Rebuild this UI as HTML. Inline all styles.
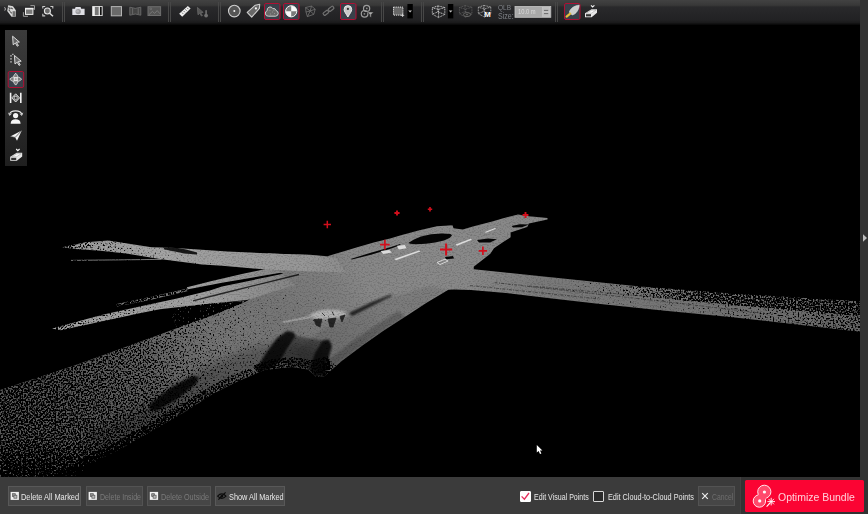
<!DOCTYPE html>
<html><head><meta charset="utf-8">
<style>
html,body{margin:0;padding:0;background:#000;overflow:hidden}
body{width:868px;height:514px;position:relative;font-family:"Liberation Sans",sans-serif;color:#e6e6e6}
#view{position:absolute;left:0;top:25px;width:860px;height:452px;background:#000;overflow:hidden}
#top{position:absolute;left:0;top:0;width:860px;height:25px;background:linear-gradient(#424242 0,#383838 21%,#29292b 28%,#222224 78%,#1a1a1b 90%,#060606 100%)}
#rside{position:absolute;left:860px;top:0;width:8px;height:514px;background:#333}
#bot{position:absolute;left:0;top:477px;width:868px;height:37px;background:#3b3b3b}
#botr{position:absolute;left:740px;top:477px;width:128px;height:37px;background:#333;border-left:1px solid #424242}
#ltool{position:absolute;left:5px;top:30px;width:22px;height:136px;background:linear-gradient(#3b3b3b 0,#323232 35%,#272727 70%,#1f1f1f 100%)}
.btn{position:absolute;top:486px;height:18px;border:1px solid #585858;background:#484848}
.btn.dis{background:#464646;border-color:#535353}
.t{position:absolute;z-index:3;white-space:nowrap;line-height:1.25;transform-origin:0 50%;color:#e8e8e8}
#opt{position:absolute;left:745px;top:480px;width:118.7px;height:32.4px;background:#fb0433;border-radius:1.5px}
.cb{position:absolute;width:9px;height:9px;border:1px solid #d8d8d8;background:#2c2c2c;border-radius:1px}
svg{position:absolute;left:0;top:0}
</style></head><body>
<div id="view"></div>
<svg id="cloud" width="868" height="514" viewBox="0 0 868 514">
<defs>
<radialGradient id="gB" gradientUnits="userSpaceOnUse" cx="450" cy="245" r="460" gradientTransform="translate(450 245) scale(1 0.6) translate(-450 -245)">
<stop offset="0" stop-color="#8a8a8a"/><stop offset="0.3" stop-color="#868686"/><stop offset="0.6" stop-color="#808080"/><stop offset="1" stop-color="#707070"/></radialGradient>
<linearGradient id="gR" gradientUnits="userSpaceOnUse" x1="520" y1="0" x2="860" y2="0"><stop offset="0" stop-color="#000" stop-opacity="0.2"/><stop offset="0.2" stop-color="#000" stop-opacity="0.33"/><stop offset="0.38" stop-color="#000" stop-opacity="0.52"/><stop offset="0.53" stop-color="#000" stop-opacity="0.62"/><stop offset="1" stop-color="#000" stop-opacity="0.62"/></linearGradient><linearGradient id="gR2" gradientUnits="userSpaceOnUse" x1="520" y1="0" x2="860" y2="0"><stop offset="0" stop-color="#000" stop-opacity="0.2"/><stop offset="0.2" stop-color="#000" stop-opacity="0.3"/><stop offset="0.53" stop-color="#000" stop-opacity="0.36"/><stop offset="0.76" stop-color="#000" stop-opacity="0.46"/><stop offset="1" stop-color="#000" stop-opacity="0.53"/></linearGradient><linearGradient id="gRd" gradientUnits="userSpaceOnUse" x1="465" y1="0" x2="545" y2="0"><stop offset="0" stop-color="#000" stop-opacity="0"/><stop offset="1" stop-color="#000" stop-opacity="0.1"/></linearGradient>
<linearGradient id="gLa" gradientUnits="userSpaceOnUse" x1="280" y1="0" x2="60" y2="0"><stop offset="0" stop-color="#000" stop-opacity="0.2"/><stop offset="0.36" stop-color="#000" stop-opacity="0.28"/><stop offset="0.82" stop-color="#000" stop-opacity="0.43"/><stop offset="1" stop-color="#000" stop-opacity="0.56"/></linearGradient>
<linearGradient id="gSt" gradientUnits="userSpaceOnUse" x1="300" y1="0" x2="50" y2="0"><stop offset="0" stop-color="#000" stop-opacity="0.2"/><stop offset="0.4" stop-color="#000" stop-opacity="0.3"/><stop offset="0.8" stop-color="#000" stop-opacity="0.43"/><stop offset="1" stop-color="#000" stop-opacity="0.56"/></linearGradient>
<linearGradient id="gM" gradientUnits="userSpaceOnUse" x1="300" y1="330" x2="0" y2="450"><stop offset="0" stop-color="#000" stop-opacity="0.3"/><stop offset="0.155" stop-color="#000" stop-opacity="0.37"/><stop offset="0.23" stop-color="#000" stop-opacity="0.4"/><stop offset="0.49" stop-color="#000" stop-opacity="0.53"/><stop offset="0.83" stop-color="#000" stop-opacity="0.6"/><stop offset="1" stop-color="#000" stop-opacity="0.61"/></linearGradient>
<linearGradient id="gDim" gradientUnits="userSpaceOnUse" x1="360" y1="270" x2="70" y2="420"><stop offset="0" stop-color="#000" stop-opacity="0"/><stop offset="0.096" stop-color="#000" stop-opacity="0.06"/><stop offset="0.266" stop-color="#000" stop-opacity="0.1"/><stop offset="0.466" stop-color="#000" stop-opacity="0.09"/><stop offset="0.726" stop-color="#000" stop-opacity="0.18"/><stop offset="1" stop-color="#000" stop-opacity="0.2"/></linearGradient>
<linearGradient id="gBL" gradientUnits="userSpaceOnUse" x1="346" y1="0" x2="60" y2="0"><stop offset="0" stop-color="#8c8c8c"/><stop offset="0.15" stop-color="#969696"/><stop offset="0.4" stop-color="#9b9b9b"/><stop offset="0.65" stop-color="#a4a4a4"/><stop offset="1" stop-color="#9a9a9a"/></linearGradient>
<linearGradient id="gBS" gradientUnits="userSpaceOnUse" x1="290" y1="0" x2="200" y2="0"><stop offset="0" stop-color="#858585"/><stop offset="1" stop-color="#a0a0a0"/></linearGradient>
<linearGradient id="gBot" gradientUnits="userSpaceOnUse" x1="0" y1="440" x2="0" y2="477"><stop offset="0" stop-color="#000" stop-opacity="0"/><stop offset="1" stop-color="#000" stop-opacity="0.3"/></linearGradient>
<filter id="bl2" x="-20%" y="-20%" width="140%" height="140%"><feGaussianBlur stdDeviation="4"/></filter>
<filter id="bl" x="-20%" y="-20%" width="140%" height="140%"><feGaussianBlur stdDeviation="0.8"/></filter>
<filter id="sp2" x="0" y="25" width="860" height="452" filterUnits="userSpaceOnUse" color-interpolation-filters="sRGB">
<feTurbulence type="fractalNoise" baseFrequency="0.55 0.9" numOctaves="1" seed="11" result="n"/>
<feComposite in="n" in2="SourceGraphic" operator="arithmetic" k1="0" k2="1" k3="1" k4="-0.5" result="c"/>
<feColorMatrix in="c" type="matrix" values="0 0 0 0 0  0 0 0 0 0  0 0 0 0 0  0 0 0 5 -2.5"/>
</filter>
<filter id="sp" x="0" y="24" width="860" height="453" filterUnits="userSpaceOnUse" color-interpolation-filters="sRGB">
<feTurbulence type="fractalNoise" baseFrequency="0.6" numOctaves="1" seed="5" result="n"/>
<feComposite in="n" in2="SourceGraphic" operator="arithmetic" k1="0" k2="1" k3="1" k4="-0.5" result="c"/>
<feColorMatrix in="c" type="matrix" values="0 0 0 0 0  0 0 0 0 0  0 0 0 0 0  0 0 0 7 -3.5"/>
<feGaussianBlur stdDeviation="0.45"/>
</filter>
</defs>
<polygon points="268.0,253.3 280.0,254.0 310.0,254.7 327.3,256.2 339.0,252.8 356.4,247.6 373.7,242.4 391.0,238.2 400.0,235.6 418.4,230.4 436.9,226.2 452.5,225.3 453.5,228.2 462.7,229.5 473.7,226.2 492.2,221.6 503.2,218.3 518.0,214.6 529.0,216.2 547.5,217.9 547.5,219.4 529.0,223.4 527.2,227.1 510.6,232.6 510.6,237.3 503.2,241.9 494.0,248.3 490.3,253.8 473.7,266.8 473.8,269.3 515.0,273.4 563.0,278.5 640.0,286.5 732.7,293.5 860.0,301.3 860.0,331.8 732.7,317.2 660.0,310.3 598.0,303.7 552.0,298.5 506.0,293.0 471.0,290.0 454.0,289.6 448.4,289.8 427.0,302.5 405.6,316.4 384.2,330.3 362.8,345.3 341.4,361.3 324.3,376.3 316.0,377.0 308.0,369.5 292.0,367.0 276.0,368.5 262.8,370.8 257.7,372.8 237.4,381.5 212.0,394.2 186.7,410.7 153.8,429.7 123.4,447.5 98.0,460.0 73.0,477.0 0.0,477.0 0.0,390.0 73.0,366.0 106.5,354.0 131.0,345.0 160.0,334.5 177.4,328.0 220.0,312.5 247.0,301.0 283.0,273.5 265.8,269.0" fill="url(#gB)"/>
<polygon points="116.6,304.0 150.0,297.0 187.6,288.5 188.0,291.0 150.0,300.0 117.0,306.5" fill="url(#gB)"/>
<polygon points="247.0,301.0 201.5,304.5 180.0,307.5 172.0,316.0 177.4,328.0 220.0,312.5" fill="url(#gB)"/>
<path d="M70.3 260.4L161.5 259.4" stroke="#8a8a8a" stroke-width="0.9"/>
<path d="M268.0,253.3 280.0,254.0 310.0,254.7 327.3,256.2 339.0,252.8 356.4,247.6 373.7,242.4 391.0,238.2 400.0,235.6 418.4,230.4 436.9,226.2 452.5,225.3 453.5,228.2 462.7,229.5 473.7,226.2 492.2,221.6 503.2,218.3 518.0,214.6 529.0,216.2 547.5,217.9 547.5,219.4 529.0,223.4 527.2,227.1 510.6,232.6 510.6,237.3 503.2,241.9 494.0,248.3 490.3,253.8 473.7,266.8 473.8,269.3 515.0,273.4 563.0,278.5 640.0,286.5 732.7,293.5 860.0,301.3 860.0,331.8 732.7,317.2 660.0,310.3 598.0,303.7 552.0,298.5 506.0,293.0 471.0,290.0 454.0,289.6 448.4,289.8 427.0,302.5 405.6,316.4 384.2,330.3 362.8,345.3 341.4,361.3 324.3,376.3 316.0,377.0 308.0,369.5 292.0,367.0 276.0,368.5 262.8,370.8 257.7,372.8 237.4,381.5 212.0,394.2 186.7,410.7 153.8,429.7 123.4,447.5 98.0,460.0 73.0,477.0 0.0,477.0 0.0,390.0 73.0,366.0 106.5,354.0 131.0,345.0 160.0,334.5 177.4,328.0 220.0,312.5 247.0,301.0 283.0,273.5 265.8,269.0Z" fill="url(#gDim)"/>
<polygon points="187.0,287.3 211.8,281.0 243.0,273.8 265.8,269.0 285.0,272.0 222.0,282.7 187.0,289.6" fill="url(#gBS)"/><polygon points="52.0,328.5 101.4,315.0 142.0,306.0 177.0,298.6 210.0,290.4 222.0,286.5 282.0,274.0 295.0,285.0 247.0,300.0 201.5,304.5 160.0,309.2 142.0,312.7 101.4,321.6 60.8,330.2" fill="url(#gBS)"/>
<polygon points="62.2,247.2 85.5,242.2 108.3,240.6 126.0,243.2 151.4,247.2 171.7,247.7 202.0,249.8 227.4,251.5 272.0,253.5 310.0,255.0 336.0,258.0 346.0,272.5 300.0,271.0 265.8,269.5 222.2,265.8 202.0,264.4 161.5,259.2 126.0,253.5 100.7,250.8 75.3,249.0" fill="url(#gBL)"/>
<polygon points="163.8,247.6 175,247.4 186,249.5 197,252.6 197,254.6 184.6,253.6 172,251 163.8,249.2" fill="#000" fill-opacity="0.85"/>
<polygon points="465,262 860,295 860,336 465,296" fill="url(#gRd)"/>
<path d="M494.6 282.6L660 301L760 313M529 286L660 297.6L740 305.5M470 285.5L600 299" stroke="#000" stroke-opacity="0.4" stroke-width="1.1" stroke-dasharray="3 1.5 1 1" fill="none"/>
<path d="M299 274.5L222 293.5L193 300.8" stroke="#000" stroke-opacity="0.75" stroke-width="1.3" fill="none"/>
<polygon points="324.3,376.3 341.4,361.3 362.8,345.3 384.2,330.3 405.6,316.4 398,311 376,325 354,340 333,356 318,368" fill="#000" fill-opacity="0.2" filter="url(#bl)"/>
<polygon points="324.3,376.3 341.4,361.3 362.8,345.3 384.2,330.3 405.6,316.4 427,302.5 448,290 430,286 392,297 351,315 322,330 296,350 300,370 316,377" fill="#000" fill-opacity="0.09" filter="url(#bl)"/>
<polygon points="98,462 153.8,431.7 212,396.2 257.7,374.8 292,369 324,378 322,350 288,340 245,349 199,371 141,406.7 85,437" fill="#000" fill-opacity="0.24" filter="url(#bl2)"/>
<polygon points="150.0,404.0 170.0,388.0 192.0,376.0 199.0,377.0 196.0,384.0 176.0,400.0 156.0,411.0 150.0,410.0" fill="#000" fill-opacity="0.85" filter="url(#bl)"/>
<polygon points="287.0,331.0 293.0,332.0 296.0,336.0 288.0,348.0 280.0,362.0 270.0,369.0 258.0,372.0 256.0,369.0 266.0,353.0 277.0,338.0" fill="#000" fill-opacity="0.85" filter="url(#bl)"/>
<polygon points="322.0,340.5 329.0,339.5 332.0,346.0 328.0,360.0 325.0,376.0 314.0,377.0 309.0,368.0 315.0,352.0" fill="#000" fill-opacity="0.85" filter="url(#bl)"/>
<polygon points="296.0,336.0 322.0,340.5 315.0,352.0 309.0,368.0 292.0,367.0 280.0,362.0" fill="#000" fill-opacity="0.38" filter="url(#bl)"/>
<polygon points="349.0,313.0 372.0,302.0 391.0,294.5 392.0,296.0 374.0,305.0 352.0,316.0" fill="#000" fill-opacity="0.75" filter="url(#bl)"/>
<polygon points="282,321.5 308,316 312,318 284,323" fill="#a8a8a8" fill-opacity="0.7"/>
<polygon points="308,316 316,311.5 326,309.5 338,310 346,312 345,316.5 334,318.5 318,320" fill="#b2b2b2" filter="url(#bl)"/>
<path d="M314 319.5L322 319L320 327L316 325ZM328 319L336 318L333 327L330 327ZM340 316.5L345 315L342 322ZM322 313l3 3M332 311.5l2 4" fill="#151515" fill-opacity="0.85" stroke="#222" stroke-width="0.8"/>
<polygon points="408.6,242.8 414.0,239.6 421.0,236.6 431.0,234.2 442.0,233.6 450.5,234.0 452.0,235.4 449.5,238.0 444.0,240.6 435.0,242.6 426.0,243.8 416.0,244.2 410.0,243.8" fill="#050505"/>
<polygon points="350.4,258.9 370.0,253.0 391.0,247.0 400.0,244.0 400.5,245.0 392.0,248.3 371.0,254.7 352.0,259.5" fill="#050505"/>
<polygon points="477.0,240.0 488.0,238.6 497.0,239.2 490.0,242.4 479.0,242.6" fill="#050505"/>
<polygon points="511.6,226.0 520.0,224.3 529.0,224.5 522.0,227.2 513.0,227.6" fill="#050505"/>
<polygon points="445.0,257.0 453.0,256.0 454.0,258.5 446.0,259.3" fill="#050505"/>
<g filter="url(#sp)"><polygon points="520,258 860,285 860,316.5 560,289.5 520,286" fill="url(#gR)"/><polygon points="520,286 560,289.5 860,316.5 860,345 520,303" fill="url(#gR2)"/><polygon points="40,230 280,245 280,262 268,271 40,255" fill="url(#gLa)"/><polygon points="40,256 268,272 300,272 300,290 247,301 220,312.5 177.4,328 160,334.5 131,345 106.5,354 73,366 0,390 0,300" fill="url(#gSt)"/><polygon points="300,290 247,301 220,312.5 177.4,328 160,334.5 131,345 106.5,354 73,366 0,390 0,477 330,477 330,300" fill="url(#gM)"/><polygon points="116.6,304.0 150.0,297.0 187.6,288.5 188.0,291.0 150.0,300.0 117.0,306.5" fill="#000" fill-opacity="0.4"/><polygon points="247.0,301.0 201.5,304.5 180.0,307.5 172.0,316.0 177.4,328.0 220.0,312.5" fill="#000" fill-opacity="0.7"/><rect x="0" y="440" width="200" height="37" fill="url(#gBot)"/><polygon points="73,477 98,460 123.4,447.5 153.8,429.7 186.7,410.7 212,394.2 237.4,381.5 257.7,372.8 250,368 228,377 204,390 180,405 148,424 118,441 90,455 50,477" fill="#000" fill-opacity="0.28"/><polygon points="257.7,372.8 276,368.5 292,367 308,369.5 316,377 324.3,376.3 336,366 328,356 312,360 294,357 272,359 252,366" fill="#000" fill-opacity="0.4"/><polygon points="324.3,376.3 341.4,361.3 362.8,345.3 384.2,330.3 378,326 357,340 336,356 322,366" fill="#000" fill-opacity="0.28"/></g>
<g filter="url(#sp2)" opacity="0.13"><rect x="0" y="25" width="860" height="452" fill="#000" fill-opacity="0.52"/></g>
<polygon points="380.6,250.9 389.2,250.0 391.8,252.6 383.2,253.9" fill="#dcdcdc"/>
<polygon points="397.0,245.7 404.8,244.9 406.5,248.3 398.7,249.5" fill="#dcdcdc"/>
<polygon points="394.4,258.9 419.0,250.4 420.5,251.4 396.0,260.2" fill="#dcdcdc"/>
<polygon points="455.5,244.6 470.5,238.8 472.0,239.8 457.0,245.8" fill="#dcdcdc"/>
<polygon points="484.8,232.0 495.0,228.0 496.0,228.8 486.0,232.8" fill="#dcdcdc"/>
<polygon points="437,262.5 445,259.2 448,261 440,264.6" fill="none" stroke="#ddd" stroke-width="0.9"/>
<path d="M323.6 224.5H331.0M327.3 220.8V228.2" stroke="#d20f1c" stroke-width="1.5" fill="none"/>
<path d="M394.4 213.0H399.6M397.0 210.4V215.6" stroke="#d20f1c" stroke-width="1.9" fill="none"/>
<path d="M427.8 209.2H432.2M430.0 207.0V211.4" stroke="#d20f1c" stroke-width="1.6" fill="none"/>
<path d="M522.6 215.0H528.4M525.5 212.1V217.9" stroke="#d20f1c" stroke-width="1.9" fill="none"/>
<path d="M380.1 244.6H389.7M384.9 239.8V249.4" stroke="#d20f1c" stroke-width="1.7" fill="none"/>
<path d="M440.0 249.5H452.2M446.1 243.4V255.6" stroke="#d20f1c" stroke-width="2.0" fill="none"/>
<path d="M478.7 250.8H487.1M482.9 246.6V255.0" stroke="#d20f1c" stroke-width="1.7" fill="none"/>
</svg>
<div id="top"></div>
<div id="rside"></div>
<div id="ltool"></div>
<div id="bot"></div><div id="botr"></div>
<div class="btn" style="left:8px;width:71px"></div>
<div class="btn dis" style="left:86px;width:55px"></div>
<div class="btn dis" style="left:147px;width:62px"></div>
<div class="btn" style="left:215px;width:68px"></div>
<div class="btn dis" style="left:698px;width:35px"></div>
<div class="t" style="left:21.3px;top:491.5px;font-size:8.6px;transform:scaleX(0.863);">Delete All Marked</div>
<div class="t" style="left:99.6px;top:491.5px;font-size:8.6px;transform:scaleX(0.817);color:#7a7a7a;">Delete Inside</div>
<div class="t" style="left:160.8px;top:491.5px;font-size:8.6px;transform:scaleX(0.844);color:#7a7a7a;">Delete Outside</div>
<div class="t" style="left:228.5px;top:491.5px;font-size:8.6px;transform:scaleX(0.854);">Show All Marked</div>
<div class="t" style="left:534.2px;top:491.5px;font-size:8.6px;transform:scaleX(0.821);">Edit Visual Points</div>
<div class="t" style="left:607.7px;top:491.5px;font-size:8.6px;transform:scaleX(0.849);">Edit Cloud-to-Cloud Points</div>
<div class="t" style="left:711.5px;top:491.5px;font-size:8.6px;transform:scaleX(0.792);color:#6e6e6e;">Cancel</div>
<div id="opt"></div>
<div class="t" style="left:777.9px;top:490.4px;font-size:11.5px;transform:scaleX(0.91);color:#ffd0da;">Optimize Bundle</div>
<div class="t" style="left:497.6px;top:2.8px;font-size:7.8px;transform:scaleX(0.84);color:#7e8186;">QLB</div>
<div class="t" style="left:497.6px;top:11.6px;font-size:8.2px;transform:scaleX(0.86);color:#7e8186;">Size:</div>
<div class="t" style="left:518px;top:7.4px;font-size:7.6px;transform:scaleX(0.76);color:#dadada;">10.0 m</div>
<div class="cb" style="left:520px;top:490.5px;background:#fff;border-color:#fff"></div><div class="cb" style="left:593px;top:490.5px"></div>
<svg id="icons" width="868" height="514" viewBox="0 0 868 514">
<rect x="62" y="2" width="1" height="20" fill="#474747"/><rect x="64" y="2" width="1" height="20" fill="#474747"/>
<rect x="168" y="2" width="1" height="20" fill="#474747"/><rect x="170" y="2" width="1" height="20" fill="#474747"/>
<rect x="218" y="2" width="1" height="20" fill="#474747"/><rect x="220" y="2" width="1" height="20" fill="#474747"/>
<rect x="381" y="2" width="1" height="20" fill="#474747"/><rect x="383" y="2" width="1" height="20" fill="#474747"/>
<rect x="421" y="2" width="1" height="20" fill="#474747"/><rect x="423" y="2" width="1" height="20" fill="#474747"/>
<rect x="555" y="2" width="1" height="20" fill="#474747"/><rect x="557" y="2" width="1" height="20" fill="#474747"/>
<rect x="264.5" y="3.5" width="15.5" height="16" rx="1.5" fill="#39404a" stroke="#b00f33" stroke-width="1"/>
<rect x="283.5" y="3.5" width="15.5" height="16" rx="1.5" fill="#39404a" stroke="#b00f33" stroke-width="1"/>
<rect x="340.5" y="3.5" width="15.5" height="16" rx="1.5" fill="#39404a" stroke="#b00f33" stroke-width="1"/>
<rect x="564.5" y="3.5" width="15.5" height="16" rx="1.5" fill="#39404a" stroke="#b00f33" stroke-width="1"/>
<rect x="8.2" y="71.5" width="15.5" height="16" rx="1.5" fill="#39404a" stroke="#b00f33" stroke-width="1"/>
<g><path d="M8.2 5.2L13 6.2L16 10.5V16.6L11.5 16.8L7.2 11Z" fill="#d8d8d8"/><path d="M12.6 11.2H15.6V16.3H12.6Z" fill="#707070"/><path d="M8.6 7.2l1.6 2M10.2 11.5l1.5 1.8M10.6 7.8l2.2 1.2M8.8 9.6l1 1.6" stroke="#555" stroke-width="1.1"/><path d="M4.6 7.2Q6.2 9 4.8 10.6" stroke="#bbb" stroke-width="1" fill="none"/></g>
<g><path d="M30.4 5.6H34.5V9.8M23.4 12.2V16.3H28" stroke="#9a9a9a" stroke-width="1" fill="none"/><rect x="25.5" y="8.4" width="7.4" height="6" fill="#7a7a7a" stroke="#efefef" stroke-width="1"/><rect x="25" y="7.9" width="8.4" height="1.6" fill="#efefef"/></g>
<g fill="none"><path d="M42.8 8.6V6.5H45.2M50.4 6.5H52.8V8.6M42.8 13.8V15.9H45.2" stroke="#c8c8c8" stroke-width="1.1"/><circle cx="47.4" cy="11" r="3" fill="#6a6a6a" stroke="#e4e4e4" stroke-width="1.1"/><path d="M49.6 13.3L53 16.3" stroke="#dcdcdc" stroke-width="1.5"/></g>
<g><path d="M72.3 8.8H75L75.6 7H80.6L81.2 8.8H84.6V14.9H72.3Z" fill="#dedee4"/><circle cx="78.2" cy="11.6" r="2.7" fill="#9a9a9e"/><circle cx="77.6" cy="11.2" r="1.4" fill="#b4b4b8"/></g>
<g><rect x="92.2" y="6.1" width="10.4" height="9.9" fill="#f2f2f2"/><rect x="94.8" y="6.9" width="3.9" height="8.3" fill="#777"/><rect x="99.9" y="6.9" width="1.8" height="8.3" fill="#111"/></g>
<rect x="111.3" y="6.6" width="10.2" height="9.2" fill="#6a6a6a" stroke="#b4b4b4" stroke-width="1"/>
<path d="M129.8 7.2Q135.3 9.6 140.8 7.2V15.2Q135.3 12.8 129.8 15.2Z M132.6 8.2V14.2M138.2 8.2V14.2" fill="#444" stroke="#6c6c6c" stroke-width="0.9"/>
<g><rect x="148" y="6.7" width="12.6" height="8.8" fill="#555" stroke="#6e6e6e" stroke-width="1"/><path d="M149 14.6L152.4 11.4L154.6 13.4L157.2 10.6L160 13.8" stroke="#7a7a7a" stroke-width="0.9" fill="none"/><circle cx="150.8" cy="8.8" r="0.9" fill="none" stroke="#7a7a7a" stroke-width="0.7"/></g>
<g><path d="M179.2 13.8L187.8 5.9L190.6 8.4L182.2 16.8Z" fill="#efefef"/><path d="M182 12.6l1.2 1.3M183.7 11l1.2 1.3M185.4 9.4l1.2 1.3M187.1 7.8l1.2 1.3" stroke="#555" stroke-width="0.8"/></g>
<g><path d="M197.4 7.4L203.2 12.4L200.6 12.6L202.4 15.6L201.4 16L199.8 13.1L198 14.8Z" fill="#555" stroke="#6a6a6a" stroke-width="0.8"/><path d="M206.1 10.8V15" stroke="#707070" stroke-width="1.6" stroke-linecap="round"/><circle cx="206.1" cy="15.6" r="1.9" fill="#707070"/></g>
<circle cx="234.3" cy="11.1" r="5.8" fill="#555" stroke="#cfcfcf" stroke-width="1.1"/><circle cx="234.3" cy="11.1" r="1" fill="#f4f4f4"/>
<path d="M247.2 12.4L255.3 5.2L259.7 4.3L259.4 8.4L251.7 17.2Z" fill="#686868" stroke="#cfcfcf" stroke-width="1.1" stroke-linejoin="round"/><circle cx="255.9" cy="8.4" r="1.1" fill="#f8f8f8"/>
<path d="M268.4 16.2H275.6A2.9 2.9 0 0 0 276 10.5A2.6 2.6 0 0 0 272.8 8.6A3 3 0 0 0 267.2 10.6A2.9 2.9 0 0 0 268.4 16.2Z" fill="#6a6a6a" stroke="#d0d0d0" stroke-width="1"/><path d="M269.5 10.5h.8M272 12h.8M270 14h.8M274 13.5h.8M273.5 10.6h.8" stroke="#aaa" stroke-width="0.8"/>
<circle cx="291.2" cy="11.3" r="5.6" fill="#7a7a7a" stroke="#f4f4f4" stroke-width="1"/><path d="M291.2 11.3V5.7A5.6 5.6 0 0 1 296.8 11.3Z M291.2 11.3V16.9A5.6 5.6 0 0 1 285.6 11.3Z" fill="#fafafa"/>
<path d="M305.6 7.5L311.5 6.1L315.2 9.2L313.8 14.3L307.4 16.6L306 12Z M310.2 11L305.6 7.5M310.2 11L311.5 6.1M310.2 11L315.2 9.2M310.2 11L313.8 14.3M310.2 11L307.4 16.6M310.2 11L306 12" fill="none" stroke="#727272" stroke-width="0.8"/>
<g transform="rotate(-38 328.5 10.8)" fill="none" stroke="#727272" stroke-width="1.2"><rect x="322.4" y="9.3" width="5.6" height="3" rx="0.8"/><rect x="329" y="9.3" width="5.6" height="3" rx="0.8"/></g>
<path d="M347.9 17C346 13.6 344.1 11.6 344.1 9.4A3.8 3.8 0 0 1 351.7 9.4C351.7 11.6 349.8 13.6 347.9 17Z" fill="#c8c8c8" stroke="#f2f2f2" stroke-width="0.9"/><circle cx="347.9" cy="8.9" r="1.1" fill="#333"/>
<g fill="none" stroke="#9c9c9c" stroke-width="1.2"><circle cx="366.6" cy="8.4" r="3.1"/><circle cx="364.6" cy="13.8" r="3.3"/></g><circle cx="366.8" cy="8.4" r="0.9" fill="#888"/><circle cx="364.4" cy="13.8" r="0.9" fill="#888"/><path d="M367.4 12H373.6L371.2 14.6V17.6L369.8 16.6V14.6Z" fill="#b0b0b0" stroke="#222" stroke-width="0.5"/>
<rect x="393.5" y="7.1" width="9.4" height="8" fill="#686868" stroke="#e6e6e6" stroke-width="1" stroke-dasharray="1.2 0.9"/><path d="M402.6 13.5V17M400.8 15.4H404.2" stroke="#ddd" stroke-width="0.8"/>
<rect x="407.4" y="4" width="5.4" height="14.4" fill="#000"/><path d="M408.2 10.4H412.0L410.09999999999997 12.4Z" fill="#c4c4c4"/>
<rect x="447.9" y="4" width="5.4" height="14.4" fill="#000"/><path d="M448.7 10.4H452.5L450.59999999999997 12.4Z" fill="#c4c4c4"/>
<path d="M437.90000000000003 5.9L444.8 7.5V14.4L438.6 17.6L432.3 14.1V7.800000000000001Z M432.3 7.800000000000001L438.6 9.4L444.8 7.5M438.6 9.4V17.6M437.90000000000003 5.9V11.9L432.3 14.1M437.90000000000003 11.9L444.8 14.4" fill="none" stroke="#d8d8d8" stroke-width="0.9" stroke-dasharray="1 0.7"/>
<path d="M465.0 5.6L471.9 7.199999999999999V14.1L465.7 17.299999999999997L459.4 13.799999999999999V7.5Z M459.4 7.5L465.7 9.1L471.9 7.199999999999999M465.7 9.1V17.299999999999997M465.0 5.6V11.6L459.4 13.799999999999999M465.0 11.6L471.9 14.1" fill="none" stroke="#626262" stroke-width="0.8" stroke-dasharray="1 0.7"/>
<ellipse cx="467" cy="14.6" rx="3.6" ry="2" fill="#2a2a2a" stroke="#707070" stroke-width="0.8"/><circle cx="467" cy="14.6" r="0.8" fill="#707070"/>
<path d="M483.90000000000003 5.4L490.8 7.0V13.9L484.6 17.1L478.3 13.6V7.300000000000001Z M478.3 7.300000000000001L484.6 8.9L490.8 7.0M484.6 8.9V17.1M483.90000000000003 5.4V11.4L478.3 13.6M483.90000000000003 11.4L490.8 13.9" fill="none" stroke="#b4b4b4" stroke-width="0.9" stroke-dasharray="1 0.7"/>
<text x="484.2" y="17" font-family="Liberation Sans, sans-serif" font-weight="bold" font-size="7.8" fill="#fff" stroke="#222" stroke-width="0.3" paint-order="stroke">M</text>
<rect x="515" y="6.5" width="35.8" height="10.8" fill="#a9a9a9" stroke="#c6c6c6" stroke-width="0.8"/><rect x="542.4" y="7.6" width="7.4" height="4.2" fill="#bcbcbc" stroke="#ccc" stroke-width="0.5"/><rect x="542.4" y="12.2" width="7.4" height="4.2" fill="#bcbcbc" stroke="#ccc" stroke-width="0.5"/><path d="M544 10.4H548.2M544 13.6H548.2" stroke="#6a6a6a" stroke-width="1"/>
<path d="M569.4 12.2C570 8.8 574 5.6 579.2 5.2C579 9.6 576 14.2 572.2 15Z" fill="#cdcdcd" stroke="#e8e8e8" stroke-width="0.6"/><path d="M570.2 13.6L566.6 16.6" stroke="#e6bf3a" stroke-width="2.2" stroke-linecap="round"/>
<path d="M585 13.2L591.5 9.2H597V12.799999999999999L591.6 17.2H585Z" fill="#e8e8e8"/><path d="M586 14.2H591V16.4H586Z" fill="#333"/><path d="M586.4 13.2L591.9 10.1H596L591.4 13.2Z" fill="#fafafa" stroke="#888" stroke-width="0.4"/><path d="M591 5.3999999999999995L592.6 6.999999999999999L594.4 5.3999999999999995" fill="none" stroke="#f4f4f4" stroke-width="1.15"/>
<path d="M12.6 36.2L19.4 42L16.4 42.2L18.4 45.6L17.2 46.2L15.4 43L13.2 44.8Z" fill="#666" stroke="#e6e6e6" stroke-width="0.9" stroke-linejoin="round"/>
<path d="M14.4 55.4L21.2 61.2L18.2 61.4L20.2 64.8L19 65.4L17.2 62.2L15 64Z" fill="#666" stroke="#e6e6e6" stroke-width="0.9" stroke-linejoin="round"/><path d="M10.4 55.8h1.2M10.4 58.8h1.2M10.4 61.8h1.2M12.4 54.4h1" stroke="#f4f4f4" stroke-width="1.2"/>
<g fill="#808080" stroke="#f4f4f4" stroke-width="0.75"><path d="M15.7 73.3C17.6 75.2 18.3 76.6 17.3 77.7H14.1C13.1 76.6 13.8 75.2 15.7 73.3Z" transform="rotate(0 15.7 79.2)"/><path d="M15.7 73.3C17.6 75.2 18.3 76.6 17.3 77.7H14.1C13.1 76.6 13.8 75.2 15.7 73.3Z" transform="rotate(90 15.7 79.2)"/><path d="M15.7 73.3C17.6 75.2 18.3 76.6 17.3 77.7H14.1C13.1 76.6 13.8 75.2 15.7 73.3Z" transform="rotate(180 15.7 79.2)"/><path d="M15.7 73.3C17.6 75.2 18.3 76.6 17.3 77.7H14.1C13.1 76.6 13.8 75.2 15.7 73.3Z" transform="rotate(270 15.7 79.2)"/><rect x="14.3" y="77.8" width="2.8" height="2.8" fill="#a0a0a0"/></g>
<path d="M10.6 92.8V103M20.8 92.8V103" stroke="#f2f2f2" stroke-width="1.6"/><path d="M15.7 93.8L19.6 97.9L15.7 102L11.8 97.9Z" fill="#777" stroke="#e8e8e8" stroke-width="0.9"/><rect x="14.4" y="96.6" width="2.6" height="2.6" fill="#333" stroke="#ccc" stroke-width="0.6"/>
<circle cx="15.6" cy="115.6" r="2.6" fill="#f4f4f4"/><path d="M10.6 123.8C10.6 120.6 12.6 119.2 15.6 119.2S20.6 120.6 20.6 123.8Z" fill="#f4f4f4"/><path d="M9.6 114.6C10.4 109.6 20.8 109.6 21.8 114.6" fill="none" stroke="#e8e8e8" stroke-width="1.1"/><path d="M8.6 112.8L9.6 115.4L11.6 113.6M22.8 112.8L21.8 115.4L19.8 113.6" fill="none" stroke="#e8e8e8" stroke-width="0.8"/>
<path d="M10.2 136.4L21.8 130.4L17 140.8L15.2 137.4Z" fill="#f2f2f2"/><path d="M15.2 137.4L21.8 130.4" stroke="#333" stroke-width="0.7"/><path d="M10.2 136.4L15.2 137.4" stroke="#333" stroke-width="0.5"/>
<path d="M10.2 156.8L16.7 152.8H22.2V156.4L16.799999999999997 160.8H10.2Z" fill="#e8e8e8"/><path d="M11.2 157.8H16.2V160.0H11.2Z" fill="#333"/><path d="M11.6 156.8L17.1 153.70000000000002H21.2L16.6 156.8Z" fill="#fafafa" stroke="#888" stroke-width="0.4"/><path d="M16.2 149.0L17.799999999999997 150.60000000000002L19.6 149.0" fill="none" stroke="#f4f4f4" stroke-width="1.15"/>
<path d="M536.8 445V452.6L538.6 451L540 454L541.4 453.4L540 450.6H542.4Z" fill="#fff"/>
<path d="M863 234.2L867 238L863 241.8Z" fill="#bdbdbd"/>
<rect x="10.6" y="491.9" width="8.3" height="8" fill="#f0f0f0"/><rect x="12.5" y="493.7" width="2.8" height="2.8" fill="#9a9a9a" stroke="#555" stroke-width="0.7"/><rect x="13.899999999999999" y="495.2" width="3" height="3" fill="#bbb" stroke="#555" stroke-width="0.7"/>
<rect x="88.6" y="491.9" width="8.3" height="8" fill="#f0f0f0"/><rect x="90.5" y="493.7" width="2.8" height="2.8" fill="#9a9a9a" stroke="#555" stroke-width="0.7"/><rect x="91.89999999999999" y="495.2" width="3" height="3" fill="#bbb" stroke="#555" stroke-width="0.7"/>
<rect x="149.8" y="491.9" width="8.3" height="8" fill="#f0f0f0"/><rect x="151.70000000000002" y="493.7" width="2.8" height="2.8" fill="#9a9a9a" stroke="#555" stroke-width="0.7"/><rect x="153.10000000000002" y="495.2" width="3" height="3" fill="#bbb" stroke="#555" stroke-width="0.7"/>
<path d="M217.6 496.2Q221.8 491.6 226 496.2Q221.8 500.6 217.6 496.2Z" fill="none" stroke="#0c0c0c" stroke-width="1.1"/><circle cx="221.8" cy="496.2" r="1.3" fill="#0c0c0c"/><path d="M218.4 499.6L225.6 492.4" stroke="#0c0c0c" stroke-width="1.2"/>
<path d="M702.2 493.2L707.8 498.8M707.8 493.2L702.2 498.8" stroke="#ececec" stroke-width="1.2"/>
<path d="M521.6 496.4L524.4 499.2L529 493" fill="none" stroke="#e62e5c" stroke-width="1.3"/>
<g><circle cx="764.3" cy="491.8" r="6.6" fill="#ff4a6c" stroke="#ffe6ec" stroke-width="1"/><circle cx="759.4" cy="501" r="6.2" fill="#ff4a6c" stroke="#ffe6ec" stroke-width="1"/><path d="M758.6 494.6L765.6 498.6" stroke="#ff4a6c" stroke-width="6"/><circle cx="764.4" cy="492" r="1.6" fill="#fff"/><circle cx="759.7" cy="500.9" r="1.6" fill="#fff"/><circle cx="771.2" cy="501.6" r="4.6" fill="#fb0433"/><path d="M771.2 497.8V505.4M767.4 501.6H775M768.5 498.9L773.9 504.3M773.9 498.9L768.5 504.3" stroke="#fff" stroke-width="0.9"/><path d="M770.2 502.8L766.6 506.6" stroke="#fff" stroke-width="1.1"/></g>
</svg>
</body></html>
